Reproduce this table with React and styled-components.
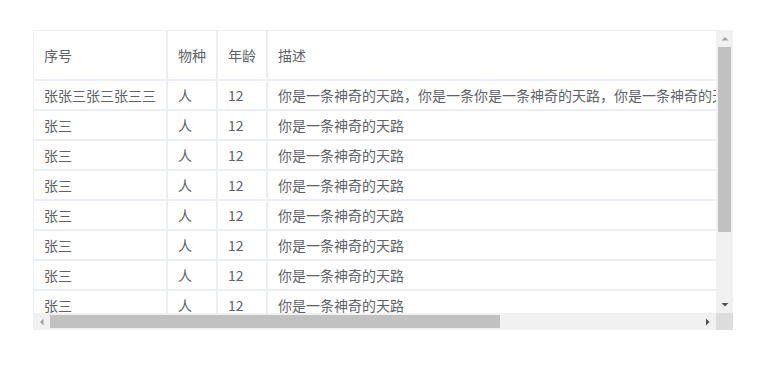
import React, { useLayoutEffect, useRef, useState } from 'react';
import styled, { createGlobalStyle } from 'styled-components';

const GlobalStyle = createGlobalStyle`
  body {
    margin: 0;
    background: #fff;
    font-family: "Noto Sans CJK SC", sans-serif;
  }
`;

const BAR = 17;

const Page = styled.div`
  padding: 30px 0 0 33px;
`;

// table view with classic desktop scrollbars drawn beside the viewport
const Frame = styled.div`
  width: 700px;
  height: 300px;
  display: grid;
  grid-template-columns: 1fr ${BAR}px;
  grid-template-rows: 1fr ${BAR}px;
`;

const Viewport = styled.div`
  overflow: auto;
  scrollbar-width: none;
  &::-webkit-scrollbar {
    display: none;
  }
`;

const Bar = styled.div`
  background: #f1f1f1;
  display: flex;
  flex-direction: ${(p) => (p.$vertical ? 'column' : 'row')};
`;

const Track = styled.div`
  flex: 1;
  position: relative;
`;

const Thumb = styled.div`
  position: absolute;
  background: #c1c1c1;
  ${(p) => (p.$vertical ? 'left: 2px; right: 2px;' : 'top: 2px; bottom: 2px;')}
`;

const ArrowButton = styled.div`
  width: ${BAR}px;
  height: ${BAR}px;
  flex: none;
  display: flex;
  align-items: center;
  justify-content: center;
  color: ${(p) => (p.$active ? '#505050' : '#a3a3a3')};
`;

const Corner = styled.div`
  background: #dcdcdc;
`;

const Table = styled.table`
  border-collapse: separate;
  border-spacing: 0;
  font-size: 14px;
  color: #606266;
`;

const HeadCell = styled.th`
  border: 1px solid #ebeef5;
  padding: 0 10px;
  line-height: 48px;
  font-weight: normal;
  text-align: left;
  white-space: nowrap;
`;

const Cell = styled.td`
  border: 1px solid #ebeef5;
  padding: 0 10px;
  line-height: 28px;
  white-space: nowrap;
`;

const arrows = {
  up: 'M0.5 4.5L4 1L7.5 4.5Z',
  down: 'M0.5 1L4 4.5L7.5 1Z',
  left: 'M4.5 0.5L1 4L4.5 7.5Z',
  right: 'M1 0.5L4.5 4L1 7.5Z',
};

const Arrow = ({ dir, active }) => {
  const flat = dir === 'up' || dir === 'down';
  return (
    <ArrowButton $active={active}>
      <svg width={flat ? 8 : 6} height={flat ? 6 : 8} viewBox={flat ? '0 0 8 6' : '0 0 6 8'}>
        <path d={arrows[dir]} fill="currentColor" />
      </svg>
    </ArrowButton>
  );
};

const longDesc =
  '你是一条神奇的天路，你是一条你是一条神奇的天路，你是一条神奇的天路，你是一条神奇的天路，你是一条神奇的天';

const rows = [
  { no: '张张三张三张三三', kind: '人', age: 12, desc: longDesc },
  ...Array.from({ length: 10 }, () => ({ no: '张三', kind: '人', age: 12, desc: '你是一条神奇的天路' })),
];

const ScrollTable = ({ children }) => {
  const view = useRef(null);
  const [m, setM] = useState({ sw: 1, cw: 1, sh: 1, ch: 1, sl: 0, st: 0 });

  const measure = () => {
    const el = view.current;
    if (!el) return;
    setM({
      sw: el.scrollWidth,
      cw: el.clientWidth,
      sh: el.scrollHeight,
      ch: el.clientHeight,
      sl: el.scrollLeft,
      st: el.scrollTop,
    });
  };

  useLayoutEffect(measure, []);

  // track length is the viewport edge minus the two arrow buttons
  const vTrack = m.ch - BAR * 2;
  const hTrack = m.cw - BAR * 2;
  const vSize = Math.max(20, (vTrack * m.ch) / m.sh);
  const hSize = Math.max(20, (hTrack * m.cw) / m.sw);
  const vPos = m.sh > m.ch ? ((vTrack - vSize) * m.st) / (m.sh - m.ch) : 0;
  const hPos = m.sw > m.cw ? ((hTrack - hSize) * m.sl) / (m.sw - m.cw) : 0;

  return (
    <Frame>
      <Viewport ref={view} onScroll={measure}>
        {children}
      </Viewport>
      <Bar $vertical>
        <Arrow dir="up" active={m.st > 0} />
        <Track>
          <Thumb $vertical style={{ top: vPos, height: vSize }} />
        </Track>
        <Arrow dir="down" active />
      </Bar>
      <Bar>
        <Arrow dir="left" active={m.sl > 0} />
        <Track>
          <Thumb style={{ left: hPos, width: hSize }} />
        </Track>
        <Arrow dir="right" active />
      </Bar>
      <Corner />
    </Frame>
  );
};

export default function App() {
  return (
    <Page>
      <GlobalStyle />
      <ScrollTable>
        <Table>
          <thead>
            <tr>
              <HeadCell>序号</HeadCell>
              <HeadCell>物种</HeadCell>
              <HeadCell>年龄</HeadCell>
              <HeadCell>描述</HeadCell>
            </tr>
          </thead>
          <tbody>
            {rows.map((r, i) => (
              <tr key={i}>
                <Cell>{r.no}</Cell>
                <Cell>{r.kind}</Cell>
                <Cell>{r.age}</Cell>
                <Cell>{r.desc}</Cell>
              </tr>
            ))}
          </tbody>
        </Table>
      </ScrollTable>
    </Page>
  );
}
